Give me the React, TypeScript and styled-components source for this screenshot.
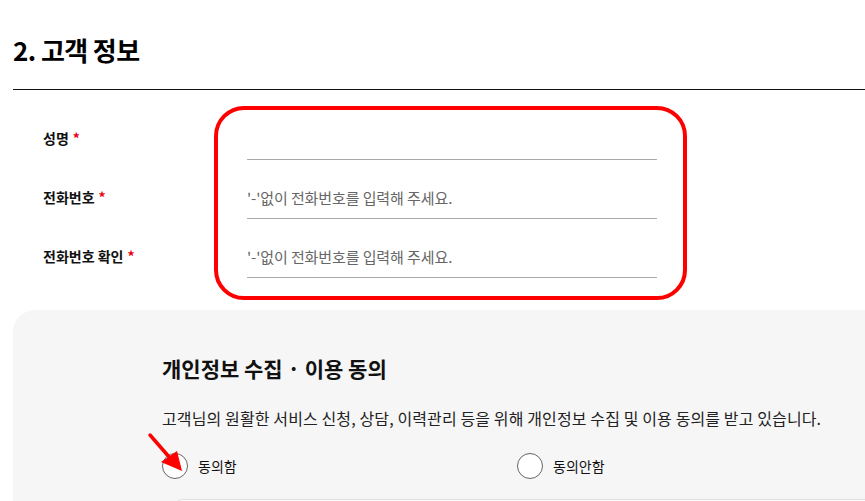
import styled, { createGlobalStyle } from "styled-components";

const GlobalStyle = createGlobalStyle`
    html, body {
        margin: 0;
        padding: 0;
        background: #fff;
        overflow: hidden;
    }
    body {
        font-family: "Noto Sans CJK KR", "Noto Sans", sans-serif;
        color: #111;
    }
    * {
        box-sizing: border-box;
    }
`;

const Page = styled.main`
    position: relative;
    padding: 34px 0 0 13px;
    width: 100%;
    height: 501px;
    overflow: hidden;
`;

const SectionTitle = styled.h2`
    margin: 0 0 23px;
    font-size: 26px;
    line-height: 32px;
    font-weight: 700;
    letter-spacing: -0.6px;
    color: #000;
`;

const Divider = styled.hr`
    margin: 0;
    border: 0;
    height: 1px;
    background: #111;
`;

const Form = styled.div`
    position: relative;
    padding-top: 30px;
    display: flex;
    flex-direction: column;
    gap: 19px;
`;

const Row = styled.div`
    display: flex;
    align-items: center;
    height: 40px;
`;

const Label = styled.label`
    width: 234px;
    padding-left: 30px;
    padding-bottom: 4px;
    font-size: 14px;
    font-weight: 700;
    color: #111;
`;

const Required = styled.span`
    color: #e60012;
    margin-left: 4px;
`;

const Input = styled.input`
    width: 410px;
    height: 40px;
    padding: 0 0 3px;
    border: 0;
    border-bottom: 1px solid #aaa;
    background: transparent;
    font-family: inherit;
    font-size: 15px;
    letter-spacing: -0.1px;
    color: #111;
    outline: none;

    &::placeholder {
        color: #666;
    }
`;

const Highlight = styled.div`
    position: absolute;
    left: 201px;
    top: 16px;
    width: 473px;
    height: 194px;
    border: 4px solid #ff0000;
    border-radius: 30px;
    pointer-events: none;
`;

const AgreePanel = styled.section`
    margin-top: 32px;
    padding: 43px 0 0 149px;
    background: #f6f6f6;
    border-top-left-radius: 22px;
    min-height: 200px;
`;

const PanelTitle = styled.h3`
    margin: 0 0 24px;
    font-size: 21px;
    line-height: 30px;
    font-weight: 700;
    color: #111;
`;

const Description = styled.p`
    margin: 0 0 24px;
    font-size: 16px;
    line-height: 22px;
    letter-spacing: 0.12px;
    color: #222;
`;

const RadioGroup = styled.div`
    display: flex;
    align-items: center;
`;

const RadioOption = styled.label<{ $width?: number }>`
    display: flex;
    align-items: center;
    gap: 10px;
    width: ${(p) => (p.$width ? `${p.$width}px` : "auto")};
    font-size: 14px;
    color: #111;
`;

const RadioCircle = styled.span`
    width: 26px;
    height: 26px;
    border-radius: 50%;
    border: 1px solid #666;
    background: #fff;
`;

const TermsBox = styled.div`
    margin: 20px 0 0 11px;
    height: 60px;
    background: #fff;
    border: 1px solid #ddd;
    border-right: 0;
    border-top-left-radius: 10px;
`;

const Arrow = styled.svg`
    position: absolute;
    left: 140px;
    top: 425px;
    width: 60px;
    height: 60px;
    pointer-events: none;
`;

function App() {
    return (
        <>
            <GlobalStyle />
            <Page>
                <SectionTitle>2. 고객 정보</SectionTitle>
                <Divider />
                <Form>
                    <Row>
                        <Label>
                            성명<Required>*</Required>
                        </Label>
                        <Input />
                    </Row>
                    <Row>
                        <Label>
                            전화번호<Required>*</Required>
                        </Label>
                        <Input placeholder="'-'없이 전화번호를 입력해 주세요." />
                    </Row>
                    <Row>
                        <Label>
                            전화번호 확인<Required>*</Required>
                        </Label>
                        <Input placeholder="'-'없이 전화번호를 입력해 주세요." />
                    </Row>
                    <Highlight />
                </Form>
                <AgreePanel>
                    <PanelTitle>개인정보 수집 · 이용 동의</PanelTitle>
                    <Description>
                        고객님의 원활한 서비스 신청, 상담, 이력관리 등을 위해 개인정보
                        수집 및 이용 동의를 받고 있습니다.
                    </Description>
                    <RadioGroup>
                        <RadioOption $width={355}>
                            <RadioCircle />
                            동의함
                        </RadioOption>
                        <RadioOption>
                            <RadioCircle />
                            동의안함
                        </RadioOption>
                    </RadioGroup>
                    <TermsBox />
                </AgreePanel>
                <Arrow viewBox="0 0 60 60">
                    <line
                        x1="10"
                        y1="10"
                        x2="30"
                        y2="33"
                        stroke="#ff0000"
                        strokeWidth="3.5"
                        strokeLinecap="round"
                    />
                    <polygon points="42,46 21,37 37,26" fill="#ff0000" />
                </Arrow>
            </Page>
        </>
    );
}

export default App;
